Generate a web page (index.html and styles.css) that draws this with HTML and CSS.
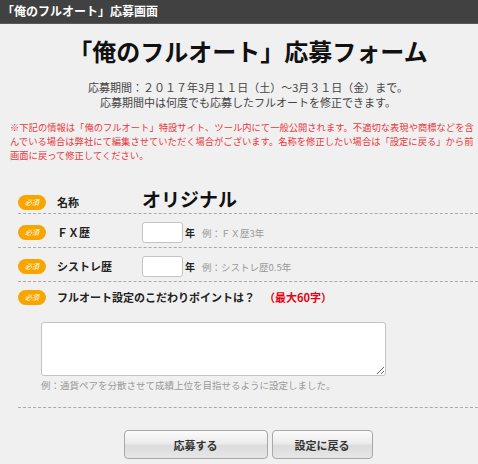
FILE: index.html
```html
<!DOCTYPE html>
<html lang="ja">
<head>
<meta charset="utf-8">
<title>「俺のフルオート」応募画面</title>
<link rel="stylesheet" href="styles.css">
</head>
<body>
<div class="topbar">「俺のフルオート」応募画面</div>
<div class="wrap">
  <h1 class="title">「俺のフルオート」応募フォーム</h1>
  <p class="period">応募期間：２０１７年3月１１日（土）～3月３１日（金）まで。<br>応募期間中は何度でも応募したフルオートを修正できます。</p>
  <p class="note">※下記の情報は「俺のフルオート」特設サイト、ツール内にて一般公開されます。不適切な表現や商標などを含<br>んでいる場合は弊社にて編集させていただく場合がございます。名称を修正したい場合は「設定に戻る」から前<br>画面に戻って修正してください。</p>

  <div class="row row-name">
    <span class="badge">必須</span>
    <span class="label">名称</span>
    <span class="value">オリジナル</span>
  </div>
  <div class="row">
    <span class="badge">必須</span>
    <span class="label">ＦＸ歴</span>
    <input class="num" type="text">
    <span class="unit">年</span>
    <span class="ex">例：ＦＸ歴3年</span>
  </div>
  <div class="row">
    <span class="badge">必須</span>
    <span class="label">シストレ歴</span>
    <input class="num" type="text">
    <span class="unit">年</span>
    <span class="ex">例：シストレ歴0.5年</span>
  </div>
  <div class="row-point">
    <div class="point-head">
      <span class="badge">必須</span>
      <span class="label-long">フルオート設定のこだわりポイントは？</span>
      <span class="max">（最大60字）</span>
    </div>
    <textarea class="area"></textarea>
    <div class="hint">例：通貨ペアを分散させて成績上位を目指せるように設定しました。</div>
  </div>

  <div class="buttons">
    <button class="btn btn-apply" type="button">応募する</button>
    <button class="btn btn-back" type="button">設定に戻る</button>
  </div>
</div>
</body>
</html>
```
FILE: styles.css
```css
* { box-sizing: border-box; }
html, body {
  margin: 0;
  padding: 0;
  background: #f0f0f0;
  font-family: "Noto Sans CJK JP", "Noto Sans", sans-serif;
  color: #222;
}
.topbar {
  height: 24px;
  line-height: 22px;
  background: #414141;
  color: #fff;
  font-weight: bold;
  font-size: 12px;
  padding-left: 2px;
  border-bottom: 1px solid #5a5a5a;
}
.wrap {
  padding-left: 18px;
  overflow: hidden;
}
.title {
  margin: 12px 0 0;
  font-size: 24px;
  line-height: 30px;
  text-align: center;
  font-weight: bold;
  color: #111;
}
.period {
  margin: 14px 0 0;
  font-size: 11px;
  line-height: 15px;
  text-align: center;
  color: #444;
}
.note {
  margin: 10px 0 0 -8px;
  font-size: 9.3px;
  line-height: 14px;
  color: #e8383d;
  white-space: nowrap;
}
.row {
  display: flex;
  align-items: center;
  padding: 8px 0 4px;
  border-bottom: 1px dashed #aaa;
}
.row-name {
  margin-top: 22px;
  padding: 2px 0 1px;
}
.row-name .badge, .row-name .label { margin-top: 7px; }
.badge {
  flex: none;
  width: 28px;
  height: 15px;
  border-radius: 8px;
  background: #f7a600;
  color: #fff;
  font-size: 7px;
  font-style: italic;
  line-height: 15px;
  text-align: center;
}
.label {
  flex: none;
  width: 85px;
  margin-left: 11px;
  font-size: 11px;
  font-weight: bold;
  line-height: 15px;
  color: #222;
}
.value {
  font-size: 19px;
  font-weight: bold;
  line-height: 26px;
  color: #111;
}
.num {
  width: 41px;
  height: 21px;
  margin: 0;
  border: 1px solid #c4c4c4;
  border-radius: 3px;
  background: #fff;
}
.unit {
  margin-left: 2px;
  font-size: 10px;
  font-weight: bold;
}
.ex {
  margin-left: 7px;
  font-size: 9.5px;
  color: #999;
}
.row-point {
  border-bottom: 1px dashed #aaa;
  padding: 8px 0 15px;
}
.point-head {
  display: flex;
  align-items: center;
  height: 15px;
}
.label-long {
  margin-left: 11px;
  font-size: 11px;
  font-weight: bold;
  line-height: 15px;
}
.max {
  margin-left: 9px;
  font-size: 11px;
  font-weight: bold;
  color: #e60012;
  line-height: 15px;
}
.area {
  display: block;
  width: 345px;
  height: 54px;
  margin: 17px 0 0 23px;
  border: 1px solid #c4c4c4;
  border-radius: 3px;
  background: #fff;
}
.hint {
  margin: 2px 0 0 23px;
  font-size: 9.5px;
  line-height: 14px;
  color: #999;
}
.buttons {
  display: flex;
  justify-content: center;
  gap: 4px;
  margin-top: 22px;
}
.btn {
  height: 29px;
  border: 1px solid #a8a8a8;
  border-radius: 4px;
  background: linear-gradient(#fbfbfb 0%, #ececec 45%, #dcdcdc 55%, #e6e6e6 100%);
  font-family: "Noto Sans CJK JP", sans-serif;
  font-size: 11px;
  font-weight: bold;
  color: #333;
  padding: 0;
}
.btn-apply { width: 144px; }
.btn-back { width: 101px; }
```
